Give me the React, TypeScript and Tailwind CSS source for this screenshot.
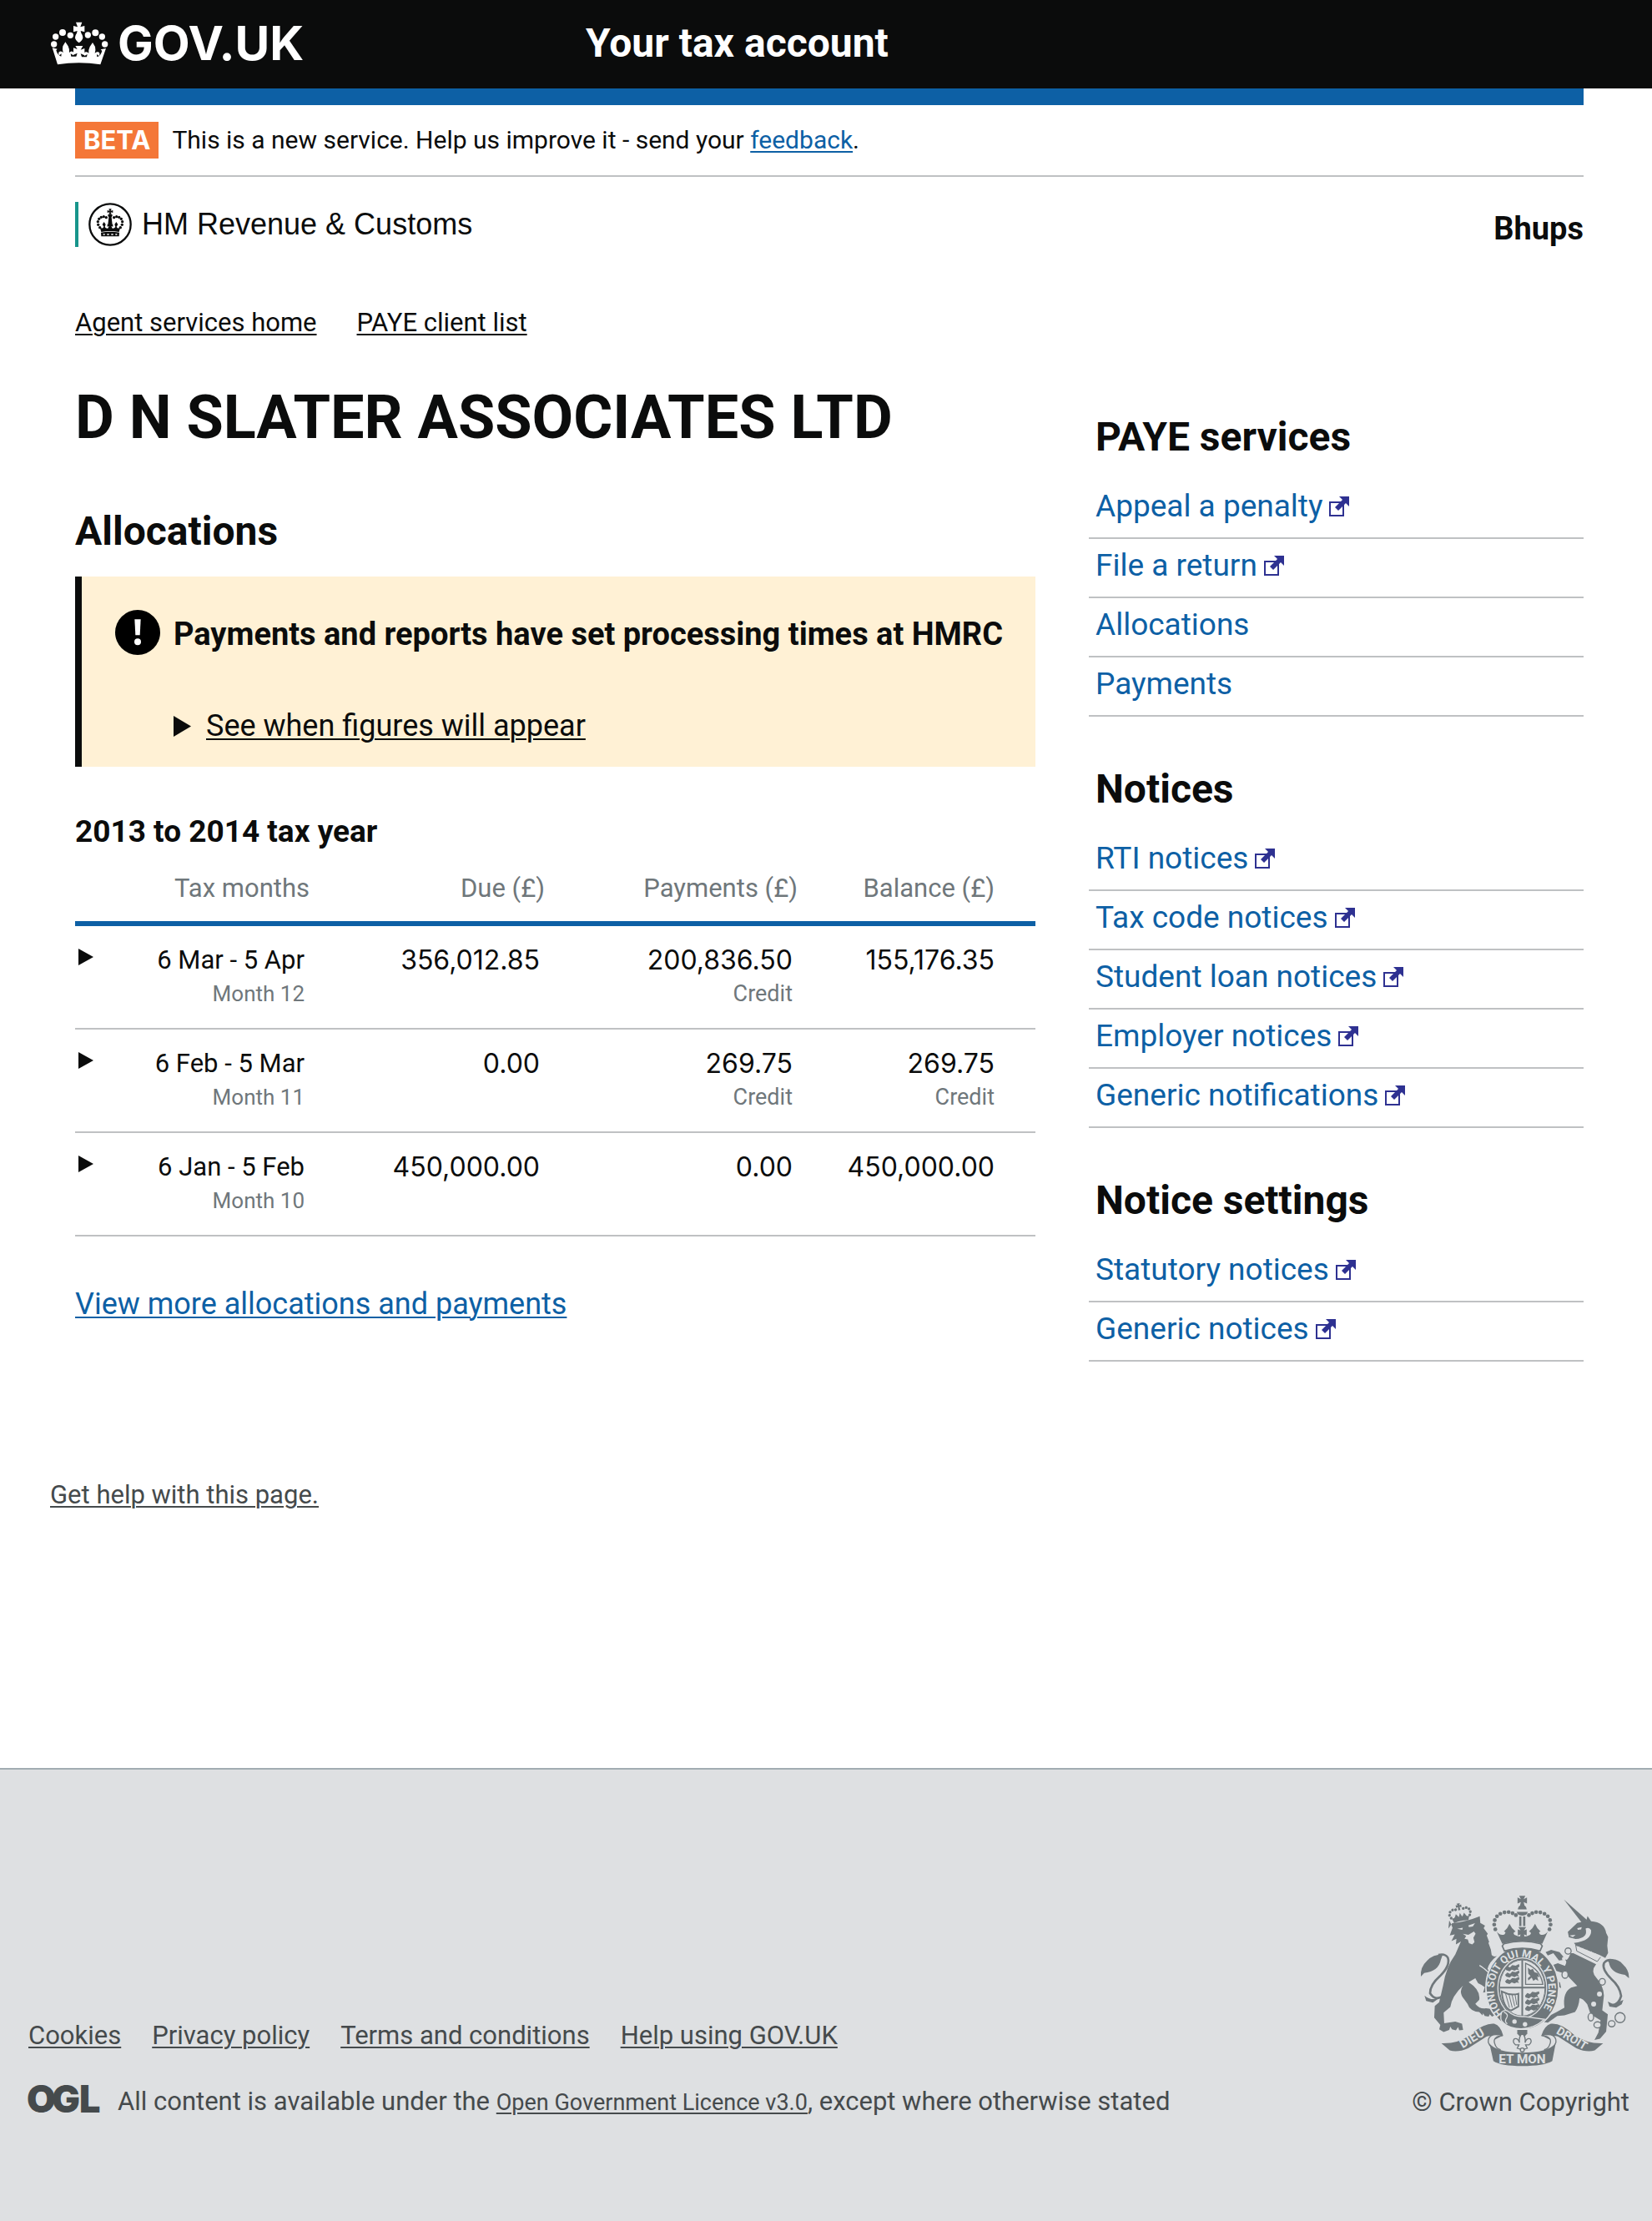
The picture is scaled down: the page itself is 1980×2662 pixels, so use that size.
import type { ReactNode } from "react";

type NavItem = { label: string; external?: boolean };
type NavSection = { title: string; items: NavItem[] };
type Amount = { value: string; note?: string };
type Row = { period: string; month: string; due: Amount; payments: Amount; balance: Amount };

const sections: NavSection[] = [
  {
    title: "PAYE services",
    items: [
      { label: "Appeal a penalty", external: true },
      { label: "File a return", external: true },
      { label: "Allocations" },
      { label: "Payments" },
    ],
  },
  {
    title: "Notices",
    items: [
      { label: "RTI notices", external: true },
      { label: "Tax code notices", external: true },
      { label: "Student loan notices", external: true },
      { label: "Employer notices", external: true },
      { label: "Generic notifications", external: true },
    ],
  },
  {
    title: "Notice settings",
    items: [
      { label: "Statutory notices", external: true },
      { label: "Generic notices", external: true },
    ],
  },
];

const rows: Row[] = [
  {
    period: "6 Mar - 5 Apr",
    month: "Month 12",
    due: { value: "356,012.85" },
    payments: { value: "200,836.50", note: "Credit" },
    balance: { value: "155,176.35" },
  },
  {
    period: "6 Feb - 5 Mar",
    month: "Month 11",
    due: { value: "0.00" },
    payments: { value: "269.75", note: "Credit" },
    balance: { value: "269.75", note: "Credit" },
  },
  {
    period: "6 Jan - 5 Feb",
    month: "Month 10",
    due: { value: "450,000.00" },
    payments: { value: "0.00" },
    balance: { value: "450,000.00" },
  },
];

const footerLinks = ["Cookies", "Privacy policy", "Terms and conditions", "Help using GOV.UK"];

function GovCrown() {
  const beads = [
    [44, 127, 11], [50, 100, 11], [75, 85, 12], [103, 95, 11],
    [166, 94, 11], [193, 86, 12], [217, 100, 11], [227, 127, 11],
  ];
  return (
    <svg viewBox="30 46 210 156" className="h-[52px] w-[70px]" fill="#fff" aria-hidden="true">
      {beads.map(([x, y, r]) => (
        <circle key={x} cx={x} cy={y} r={r} />
      ))}
      <path d="M123 48h22l-6 17 15-4v22l-14-4 2 8q6 8 6 15 0 10-14 20-14-10-14-20 0-7 6-15l2-8-14 4V61l15 4z" />
      <path d="M121 133h27l-8 14 14-5v25l-14-6 4 12h18l2-10-10 6q-5-10 4-14 8-1 11 5-2-12 4-24l10-15 9 15q3 12-1 24 4-7 12-5 9 4 3 14l-8-6 1 10q12-2 18-22l-5-5 19-4-20 58q-77-12-154 0L38 140l18 4-4 5q6 20 18 22l1-10-8 6q-6-10 2-14 8-2 12 5-4-12-1-24l9-15 10 15q6 12 4 24 3-6 11-5 9 4 4 14l-10-6 2 10h18l4-12-14 6v-25l14 5z" />
    </svg>
  );
}

function HmrcCrest() {
  const arc = [
    [104, 113], [98, 103], [97, 92], [101, 82], [109, 76], [118, 74], [127, 77],
    [155, 77], [164, 74], [173, 76], [181, 82], [185, 92], [184, 103], [178, 113],
  ];
  return (
    <svg viewBox="63 24 156 156" className="size-[52px]" fill="#0b0c0c" aria-hidden="true">
      <circle cx="141" cy="102" r="74" fill="none" stroke="#0b0c0c" strokeWidth="7" />
      {arc.map(([x, y]) => (
        <circle key={`${x}-${y}`} cx={x} cy={y} r="5" />
      ))}
      <path d="M136 46h10l-3 7 8-2v9l-8-2 3 7h-10l3-7-8 2v-9l8 2z" />
      <path d="M132 68q9-6 18 0l-4 8 3 28h-16l3-28z" />
      <path d="M104 112q10 8 14-2l-5-8 6-9 6 9-3 9q4 7 11 5l4-8-6 2v-9l6 2-3-7h14l-3 7 6-2v9l-6-2 4 8q7 2 11-5l-3-9 6-9 6 9-5 8q4 10 14 2l-5 17q-32-6-64 0z" />
      <path d="M108 131q33-6 66 0l-1 14h-64z" />
      <path d="M116 138h6m8 0h7m8 0h7m8 0h6" stroke="#fff" strokeWidth="4" />
    </svg>
  );
}

function ExternalIcon() {
  return (
    <svg viewBox="0 0 24 24" className="ml-2 inline-block size-6 align-baseline" role="img" aria-label="opens in a new window">
      <rect x="1" y="7" width="16" height="16" fill="none" stroke="#2e3191" strokeWidth="2" />
      <path d="M12 0h12v12l-4-4-9 9-4-4 9-9z" fill="#2e3191" />
    </svg>
  );
}

function Triangle({ className }: { className: string }) {
  return (
    <svg viewBox="0 0 20 24" preserveAspectRatio="none" className={className} fill="#0b0c0c" aria-hidden="true">
      <path d="M0 0l20 12-20 12z" />
    </svg>
  );
}

function WarningIcon() {
  return (
    <svg viewBox="54 32 162 162" className="size-[54px] shrink-0" role="img" aria-label="Warning">
      <circle cx="135" cy="113" r="81" fill="#000" />
      <path d="M124 66h22l-3 57h-16z" fill="#fff" />
      <circle cx="135" cy="147" r="12" fill="#fff" />
    </svg>
  );
}

function OglLogo() {
  return (
    <svg viewBox="0 0 86 34" className="h-[34px] w-[86px] shrink-0 overflow-visible" role="img" aria-label="OGL">
      <text x="-2 28 61" y="33" fontFamily="Inter, sans-serif" fontWeight="900" fontSize="45" fill="#454a4c">
        OGL
      </text>
    </svg>
  );
}

const G = "#6f777b";
const BG = "#dee0e2";

function RoyalArms() {
  const leftBeads = [
    [401, 214], [397, 197], [399, 181], [407, 167], [419, 158], [434, 153], [449, 152], [463, 156], [475, 163],
  ];
  const links = [
    [663, 292, 11, 11], [652, 377, 11, 13], [786, 403, 11, 12], [745, 530, 10, 14],
    [769, 558, 13, 11], [820, 554, 12, 11], [850, 532, 18, 18],
  ];
  const spots = [[648, 320, 7], [776, 447, 9], [755, 483, 9]];
  return (
    <svg viewBox="130 90 754 618" className="h-[206px] w-[251px]" fill={G} role="img" aria-label="Royal coat of arms">
      {/* Lion's crown */}
      <g transform="rotate(-10 274 160)">
        {[[240, 168], [236, 157], [240, 146], [250, 140], [261, 141], [289, 141], [300, 140], [309, 146], [312, 157], [308, 168]].map(([x, y]) => (
          <circle key={`${x}${y}`} cx={x} cy={y} r="5" />
        ))}
        <path d="M268 120h12l-3 7 7-2v10l-7-2 1 12h-8l1-12-7 2v-10l7 2z" />
        <path d="M242 170q10 3 13-5l4-8 6 8 3 4 6-14 6 14 4-4 5-8 5 8q3 8 12 5l-6 16q-26-6-52 2z" />
      </g>
      {/* Lion */}
      <path d="M232 211l14-19q50-5 99-25l2 24 17 10-5 9 15 20-4 6 9 24-3 2 9 25 3 20q8 8 19 3-28 22-34 46l34 52-3 34-18 9-11-14-18 5 6-20-12-8-12-6-10-18-24 14q44 28 38 64l-14 14q16 20 38 16l30 4 10 18-18 8-8-8-4 8-14-2-6-10-2 8-12-12q-34-4-42-30l-12-16q-22-26-4-50-42 40-46 78l-24 20 2 38 40-6 24 8 4 22-14 2-4-12-8 12-14-4-6-10-4 12-20 8-16-10 4-16-22-26 2-42 16-14 14-60q10-66 44-112l20-46-18 10 2-20-18 8 12-24-18 4 10-28q-6-16-12-26z" />
      <path d="M264 212l20-4-2 8zM304 200l24-8-8 12-14 2zM284 230l20 4 20-12 6 8-8 14 4 16-8 8-12-4-4-14-12-2 6-10z" fill={BG} />
      <path d="M344 344q36 22 56 56" fill="none" stroke={BG} strokeWidth="4" />
      {/* Lion's tail */}
      <path d="M216 450q-30 26-50-6 0-30 36-62 38-38 28-66-10-16-34-10" fill="none" stroke={G} strokeWidth="8" />
      <path d="M212 304q-36 0-56 22-26 24-23 58l12-13q52-6 60-48zM146 452q22 20 52 10l-22 16-24-6z" />
      {/* Unicorn */}
      <path d="M648 107l84 74-16 14z" />
      <path d="M728 184l5-18 13 19q48 4 54 42l7 14-3 32 3 26-10 18-20-10-85-34-8-10q64-8 62-46-6-12-20-6 10 34-36 38l-24-6-4-20 34-32z" />
      <path d="M696 210l16-4-2 8-12 2zM668 236l22-2-10 8z" fill={BG} />
      <path d="M690 268l4 18 8-12 5 18 9-12 5 18 10-12 5 20 11-14 4 20 12-12 3 18 12-6-8 20-86-36z" fill={BG} />
      <path d="M690 268l4 24 74 38 12-16" fill="none" stroke={G} strokeWidth="3" />
      <path d="M682 300l82 40q-22 26 2 50 24 26 26 62l-6 54 20 14-6 62-22 26-20 4 14-26 8-44-36-22-12-36q-16-22-28-22-2 30-16 50l-38 12-26 2-34 24-14-2 14-20 32-16 28-16q-8-54 24-72l22-6-42-44-46-14q-14 18 26 46l4 20-22-14-24-24-14-34 48-18 26 10q10-20-2-22l-20 2-20-26-20 8-8-12 20-8 30 8 24 28q6 2 16-24z" />
      {/* Unicorn's tail */}
      <path d="M816 486q28 4 38-32-4-34-36-62-34-34-26-56 12-16 34-10" fill="none" stroke={G} strokeWidth="8" />
      <path d="M804 324q36-8 56 16 24 22 22 50l-14-12q-52-6-58-44zM806 474l20 10 36-16-6 16-20 12-24-4z" />
      {spots.map(([x, y, r]) => (
        <circle key={x} cx={x} cy={y} r={r} fill={BG} />
      ))}
      {links.map(([x, y, rx, ry]) => (
        <ellipse key={x} cx={x} cy={y} rx={rx} ry={ry} fill={BG} stroke={G} strokeWidth="4" />
      ))}
      {/* Imperial crown */}
      {leftBeads.map(([x, y]) => (
        <g key={`${x}-${y}`}>
          <circle cx={x} cy={y} r="7" />
          <circle cx={997 - x} cy={y} r="7" />
        </g>
      ))}
      <path d="M487 93h22l-6 12 12-6v22l-12-5 3 12h-16l3-12-12 5V99l12 6zM482 142q2-14 16-16 14 2 16 16zM478 151h40q-4 14-20 14t-20-14zM487 168h8v34h-8zM501 168h8v34h-8zM484 206h28l-8 12 10-4v22l-10-4 3 10h-18l3-10-10 4v-22l10 4z" />
      <path d="M406 222q12 16 28 10 8-8-2-10 14-12 20-28 8 18 22 28-12 4-4 12 14 8 28 6 16 2 28-6 8-8-4-12 14-10 22-28 6 16 20 28-10 2-2 10 16 6 28-10l-20 44q-72-20-144 0z" />
      {/* Garter */}
      <ellipse cx="498" cy="425" rx="131" ry="150" stroke={BG} strokeWidth="5" />
      <path d="M432 266q66-18 132 0l6 8-8 18q-64-20-128 0l-8-18z" fill={BG} stroke={G} strokeWidth="5" />
      <ellipse cx="498" cy="425" rx="88" ry="108" fill="none" stroke={BG} strokeWidth="4" />
      <path id="garter-path" d="M430 519A98 117 0 1 1 572 502" fill="none" />
      <text fontFamily="Roboto, sans-serif" fontWeight="700" fontSize="38" fill={BG}>
        <textPath href="#garter-path" startOffset="2">HONI SOIT QUI MAL Y PENSE</textPath>
      </text>
      <ellipse cx="498" cy="425" rx="83" ry="102" fill={BG} />
      <ellipse cx="498" cy="425" rx="82" ry="101" fill="none" stroke={G} strokeWidth="3" />
      <path d="M498 324v204M416 424h165" stroke={G} strokeWidth="6" />
      {[345, 368, 391].map((y) => (
        <path key={y} d={`M436 ${y + 10}l8-8 10 4 8-8 12 2 12-6 2 8-6 6 4 8-8-2-8 4-10-4-8 6-12-4z`} />
      ))}
      {[443, 466, 489].map((y) => (
        <path key={y} d={`M508 ${y + 10}l8-10 10 4 8-8 12 2 12-4 2 8-8 6 4 8-8-2-8 4-10-4-8 6-12-4z`} />
      ))}
      <path d="M510 336v76h62q-8-54-62-76z" fill="none" stroke={G} strokeWidth="4" />
      <path d="M518 352l10 8 8-4 6 12 12 4 6 14-8-2 4 16-10-6-8 6-6-12-12 10-2-8 10-8-8-8z" />
      <path d="M424 438q6 60 34 68l26-14v-46q-30 8-60-8z" fill="none" stroke={G} strokeWidth="6" />
      <path d="M438 446l14 50M450 448l12 48M461 449l10 42M472 448l6 38" stroke={G} strokeWidth="3" />
      {/* Buckle strap */}
      <path d="M424 512q14-12 26 0 20 18 54 16l74 10q-38 34-84 34-40 0-62-20-18-10-8-40z" stroke={BG} strokeWidth="4" />
      <path d="M432 512q18 8 10 20-10 14 2 22" fill="none" stroke={BG} strokeWidth="4" />
      <circle cx="470" cy="546" r="8" fill={BG} />
      <circle cx="508" cy="556" r="8" fill={BG} />
      {/* Pendant fleur-de-lis */}
      <path d="M480 576h36v14l-10 10h-16l-10-10z" />
      <path d="M498 588q14 14 10 34 6-18 18-14 10 10-4 22h-12l6 12-18 6-18-6 6-12h-12q-14-12-4-22 12-4 18 14-4-20 10-34z" fill={BG} stroke={G} strokeWidth="4" />
      <circle cx="498" cy="648" r="7" fill={BG} stroke={G} strokeWidth="4" />
      {/* Motto scroll */}
      <path d="M207 624q60 2 104-30 50-44 86-40 24 8 32 42l-32 16q-12-20-28-12l-66 42q-36 16-66 8zM789 624q-60 2-104-30-48-44-84-40-24 8-34 42l32 16q12-20 28-12l66 42q36 16 66 8z" />
      <path d="M428 597q-36 2-30 26 6 22 22 24l-12 4q-38-20-32-40 8-26 52-14zM567 597q38 2 32 26-6 22-22 24l10 4q38-20 32-40-8-26-52-14z" fill={BG} stroke={G} strokeWidth="4" />
      <path d="M380 626q28 32 118 32t120-32l-12 62q-30 18-108 18t-104-18z" />
      <g fontFamily="Roboto, sans-serif" fontWeight="700" fill={BG} textAnchor="middle">
        <text x="498" y="697" fontSize="46">ET MON</text>
        <text x="320" y="620" fontSize="44" transform="rotate(-31 320 612)">DIEU</text>
        <text x="674" y="620" fontSize="42" transform="rotate(31 674 612)">DROIT</text>
      </g>
    </svg>
  );
}

function AmountCell({ amount, last }: { amount: Amount; last?: boolean }) {
  return (
    <td className={`border-b-2 border-[#bfc1c3] pt-[21px] pb-[21px] align-top ${last ? "pr-[49px]" : "pr-[6px]"}`}>
      <div className="font-[Inter,sans-serif] text-[32px] leading-[40px]">{amount.value}</div>
      {amount.note && <div className="text-[27px] leading-[40px] text-[#6f777b]">{amount.note}</div>}
    </td>
  );
}

function UnderlinedLink({ children, className = "" }: { children: ReactNode; className?: string }) {
  return (
    <a href="#" className={`underline decoration-2 underline-offset-[3px] ${className}`}>
      {children}
    </a>
  );
}

export default function App() {
  return (
    <div className="flex min-h-screen flex-col bg-white font-[Roboto,sans-serif] text-[#0b0c0c]">
      <header className="bg-[#0b0c0c] text-white">
        <div className="grid h-[106px] grid-cols-[642px_1fr] items-center px-[60px]">
          <a href="#" className="flex items-center gap-[11px] pb-[2px]">
            <GovCrown />
            <span className="font-[Inter,sans-serif] text-[57px] leading-[64px] font-bold">GOV.UK</span>
          </a>
          <a href="#" className="pb-[2px] text-[48px] leading-[56px] font-bold">Your tax account</a>
        </div>
      </header>

      <div className="mr-[82px] ml-[90px]">
        <div className="h-5 bg-[#0d60a5]" />
        <div className="flex items-center gap-4 border-b-2 border-[#bfc1c3] py-5">
          <strong className="bg-[#f47738] px-[10px] font-[Inter,sans-serif] text-[31px] leading-[44px] font-bold text-white">BETA</strong>
          <p className="text-[30px] leading-[44px]">
            This is a new service. Help us improve it - send your{" "}
            <UnderlinedLink className="text-[#0d60a5]">feedback</UnderlinedLink>.
          </p>
        </div>

        <div className="mt-[30px] flex items-end justify-between">
          <div className="flex h-[54px] items-center gap-3 border-l-4 border-[#17958b] pl-3">
            <HmrcCrest />
            <span className="font-['Liberation_Sans',sans-serif] text-[36px] leading-[44px]">HM Revenue &amp; Customs</span>
          </div>
          <span className="text-[38px] leading-[44px] font-bold">Bhups</span>
        </div>

        <nav aria-label="Breadcrumb" className="mt-[71px] flex gap-12 text-[31px] leading-[40px]">
          <UnderlinedLink>Agent services home</UnderlinedLink>
          <UnderlinedLink>PAYE client list</UnderlinedLink>
        </nav>

        <div className="mt-[54px] grid grid-cols-[1151fr_593fr] gap-16">
          <main>
            <h1 className="text-[72px] leading-[80px] font-bold">D N SLATER ASSOCIATES LTD</h1>
            <h2 className="mt-[68px] text-[48px] leading-[56px] font-bold">Allocations</h2>

            <section className="mt-[26px] border-l-8 border-[#0b0c0c] bg-[#fff1d5] pt-10 pb-[25px] pl-10">
              <div className="flex items-start gap-4">
                <WarningIcon />
                <strong className="text-[38px] leading-[58px] font-bold">
                  Payments and reports have set processing times at HMRC
                </strong>
              </div>
              <details className="mt-[57px] pl-[70px]">
                <summary className="flex cursor-pointer list-none items-center gap-[18px] text-[36px] leading-[48px]">
                  <Triangle className="h-[25px] w-[21px]" />
                  <span className="underline decoration-2 underline-offset-[3px]">See when figures will appear</span>
                </summary>
              </details>
            </section>

            <h3 className="mt-[54px] text-[37px] leading-[48px] font-bold">2013 to 2014 tax year</h3>
            <table className="w-full table-fixed border-separate border-spacing-0 text-right text-[31px] leading-[40px]">
              <thead>
                <tr className="text-[#6f777b]">
                  <td className="w-[46px] border-b-6 border-[#0d60a5]" />
                  <th scope="col" className="w-[235px] border-b-6 border-[#0d60a5] pt-6 pb-[19px] font-normal">Tax months</th>
                  <th scope="col" className="w-[282px] border-b-6 border-[#0d60a5] pt-6 pb-[19px] font-normal">Due (£)</th>
                  <th scope="col" className="w-[303px] border-b-6 border-[#0d60a5] pt-6 pb-[19px] font-normal">Payments (£)</th>
                  <th scope="col" className="border-b-6 border-[#0d60a5] pt-6 pr-[49px] pb-[19px] font-normal">Balance (£)</th>
                </tr>
              </thead>
              <tbody>
                {rows.map((row) => (
                  <tr key={row.month}>
                    <td className="border-b-2 border-[#bfc1c3] pt-[27px] pl-1 text-left align-top">
                      <button type="button" aria-label={`Show ${row.period}`} className="block cursor-pointer">
                        <Triangle className="h-5 w-[18px]" />
                      </button>
                    </td>
                    <td className="border-b-2 border-[#bfc1c3] pt-[21px] pr-[6px] pb-[21px] align-top">
                      <div>{row.period}</div>
                      <div className="text-[26px] leading-[40px] text-[#6f777b]">{row.month}</div>
                    </td>
                    <AmountCell amount={row.due} />
                    <AmountCell amount={row.payments} />
                    <AmountCell amount={row.balance} last />
                  </tr>
                ))}
              </tbody>
            </table>
            <p className="mt-[57px] text-[36px] leading-[48px]">
              <UnderlinedLink className="text-[#0d60a5]">View more allocations and payments</UnderlinedLink>
            </p>
          </main>

          <aside className="flex flex-col gap-[59px] pt-[35px]">
            {sections.map((section) => (
              <section key={section.title}>
                <h2 className="mb-[23px] pl-2 text-[48px] leading-[56px] font-bold">{section.title}</h2>
                <ul>
                  {section.items.map((item) => (
                    <li key={item.label} className="border-b-2 border-[#bfc1c3] pt-2 pb-[13px] pl-2 text-[37px] leading-[48px]">
                      <a href="#" className="text-[#0d60a5]">
                        {item.label}
                        {item.external && <ExternalIcon />}
                      </a>
                    </li>
                  ))}
                </ul>
              </section>
            ))}
          </aside>
        </div>
      </div>

      <p className="mt-[140px] mb-[307px] px-[60px] text-[31px] leading-[40px] text-[#454a4c]">
        <UnderlinedLink>Get help with this page.</UnderlinedLink>
      </p>

      <footer className="flex grow items-end justify-between border-t-2 border-[#a1acb2] bg-[#dee0e2] pt-[148px] pr-[27px] pb-[122px] pl-[34px] text-[31px] leading-[40px] text-[#454a4c]">
        <div className="flex flex-col gap-[39px]">
          <ul className="flex gap-[37px]">
            {footerLinks.map((label) => (
              <li key={label}>
                <UnderlinedLink>{label}</UnderlinedLink>
              </li>
            ))}
          </ul>
          <div className="flex items-start gap-[21px]">
            <OglLogo />
            <p>
              All content is available under the{" "}
              <UnderlinedLink className="text-[27px]">Open Government Licence v3.0</UnderlinedLink>, except where otherwise
              stated
            </p>
          </div>
        </div>
        <div className="flex flex-col items-end gap-[23px]">
          <RoyalArms />
          <a href="#">© Crown Copyright</a>
        </div>
      </footer>
    </div>
  );
}
